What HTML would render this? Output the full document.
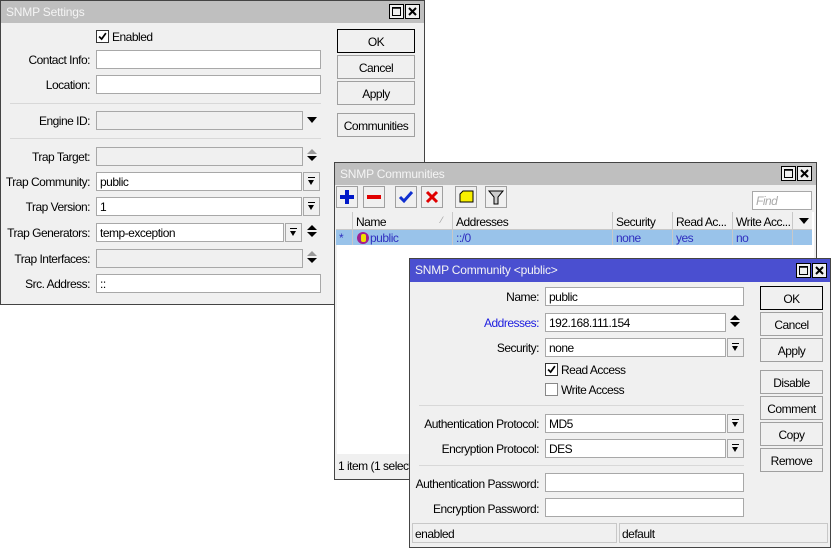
<!DOCTYPE html>
<html><head><meta charset="utf-8"><style>
*{box-sizing:border-box;margin:0;padding:0}
body{width:833px;height:548px;background:#fff;position:relative;overflow:hidden;font-family:"Liberation Sans",sans-serif;font-size:12px;letter-spacing:-0.5px;color:#000}
.a{position:absolute}
.win{position:absolute;background:#f0f0f0;border:1px solid #444}
.tb{position:absolute;left:0;right:0;top:0;height:22px;background:#bfbfbf;color:#f4f4f4;font-size:12px;padding:4px 0 0 5px;letter-spacing:-0.2px}
.tbtn{position:absolute;top:3px;width:15px;height:15px}
.lbl{position:absolute;text-align:right;white-space:nowrap}
.fld{position:absolute;height:19px;background:#fff;border:1px solid #a8a8a8;padding:2px 0 0 3px;white-space:nowrap;overflow:hidden}
.dis{background:#f0f0f0}
.btn{position:absolute;height:24px;border:1px solid #a0a0a0;background:#f0f0f0;text-align:center;padding-top:5px;font-size:12px}
.btn.def{border:1px solid #000}
.sep{position:absolute;height:1px;background:#d8d8d8}
.dd{position:absolute;width:17px;height:19px;border:1px solid #a8a8a8;background:#f0f0f0}
.dd::before{content:"";position:absolute;left:4px;top:4px;width:7px;height:1px;background:#000}
.dd::after{content:"";position:absolute;left:4px;top:7px;border-left:3.5px solid transparent;border-right:3.5px solid transparent;border-top:5px solid #000}
.sp{position:absolute;width:10px;height:14px}
.sp::before{content:"";position:absolute;left:0;top:0;border-left:5px solid transparent;border-right:5px solid transparent;border-bottom:5px solid #000}
.sp::after{content:"";position:absolute;left:0;top:7px;border-left:5px solid transparent;border-right:5px solid transparent;border-top:5px solid #000}
.sp.g::before{border-bottom-color:#999}
.cb{position:absolute;width:13px;height:13px;border:1px solid #333;background:#fff}
.cb.e{border-color:#888}
.tbb{position:absolute;top:186px;width:22px;height:22px;border:1px solid #a0a0a0;background:#f0f0f0}
.th{position:absolute;top:212px;height:18px;border-right:1px solid #c8c8c8;padding:3px 0 0 3px;white-space:nowrap;overflow:hidden}
.td{position:absolute;top:230px;height:15px;color:#3030c0;padding:1px 0 0 3px;border-right:1px solid #c8c8c8}
</style></head><body>
<svg width="0" height="0" style="position:absolute"><defs>
<symbol id="mx" viewBox="0 0 15 15"><rect x=".5" y=".5" width="14" height="14" fill="#f0f0f0" stroke="#000"/><rect x="3.5" y="3.5" width="8" height="8" fill="none" stroke="#000"/><path d="M3 4h9" stroke="#000" stroke-width="1.5"/></symbol>
<symbol id="cl" viewBox="0 0 15 15"><rect x=".5" y=".5" width="14" height="14" fill="#f0f0f0" stroke="#000"/><path d="M4 4l7 7M11 4l-7 7" stroke="#000" stroke-width="2"/></symbol>
<symbol id="ck" viewBox="0 0 13 13"><path d="M2.5 6.5l3 3 5-7" stroke="#000" stroke-width="2" fill="none"/></symbol>
</defs></svg>

<!-- Window 1 -->
<div class="win" style="left:0;top:0;width:425px;height:305px">
<div class="tb">SNMP Settings<svg class="tbtn" style="left:388px"><use href="#mx"/></svg><svg class="tbtn" style="left:404px"><use href="#cl"/></svg></div>
</div>
<div class="cb" style="left:96px;top:30px"><svg width="11" height="11" viewBox="0 0 13 13"><use href="#ck"/></svg></div><div class="a" style="left:112px;top:30px">Enabled</div>
<div class="lbl" style="right:743px;top:53px">Contact Info:</div><div class="fld" style="left:96px;top:50px;width:225px"></div>
<div class="lbl" style="right:743px;top:78px">Location:</div><div class="fld" style="left:96px;top:75px;width:225px"></div>
<div class="sep" style="left:10px;top:103px;width:311px"></div>
<div class="lbl" style="right:743px;top:114px">Engine ID:</div><div class="fld dis" style="left:96px;top:111px;width:207px"></div>
<div class="a" style="left:307px;top:117px;border-left:5px solid transparent;border-right:5px solid transparent;border-top:6px solid #000"></div>
<div class="sep" style="left:10px;top:138px;width:311px"></div>
<div class="lbl" style="right:743px;top:150px">Trap Target:</div><div class="fld dis" style="left:96px;top:147px;width:207px"></div><div class="sp g" style="left:307px;top:149px"></div>
<div class="lbl" style="right:743px;top:175px">Trap Community:</div><div class="fld" style="left:96px;top:172px;width:206px">public</div><div class="dd" style="left:303px;top:172px"></div>
<div class="lbl" style="right:743px;top:200px">Trap Version:</div><div class="fld" style="left:96px;top:197px;width:206px">1</div><div class="dd" style="left:303px;top:197px"></div>
<div class="lbl" style="right:743px;top:226px">Trap Generators:</div><div class="fld" style="left:96px;top:223px;width:188px">temp-exception</div><div class="dd" style="left:285px;top:223px"></div><div class="sp" style="left:307px;top:225px"></div>
<div class="lbl" style="right:743px;top:252px">Trap Interfaces:</div><div class="fld dis" style="left:96px;top:249px;width:207px"></div><div class="sp g" style="left:307px;top:251px"></div>
<div class="lbl" style="right:743px;top:277px">Src. Address:</div><div class="fld" style="left:96px;top:274px;width:225px">::</div>
<div class="btn def" style="left:337px;top:29px;width:78px">OK</div>
<div class="btn" style="left:337px;top:55px;width:78px">Cancel</div>
<div class="btn" style="left:337px;top:81px;width:78px">Apply</div>
<div class="btn" style="left:337px;top:113px;width:78px">Communities</div>

<!-- Window 2 -->
<div class="win" style="left:334px;top:162px;width:483px;height:318px">
<div class="tb">SNMP Communities<svg class="tbtn" style="left:446px"><use href="#mx"/></svg><svg class="tbtn" style="left:462px"><use href="#cl"/></svg></div>
<div class="a" style="left:2px;top:49px;width:477px;height:242px;background:#fff"></div>
<div class="a" style="left:3px;top:296px">1 item (1 selected)</div>
</div>
<div class="tbb" style="left:336px"><svg width="20" height="20" style="position:absolute;left:0;top:0"><path d="M10 3v14M3 10h14" stroke="#0018c8" stroke-width="4"/></svg></div>
<div class="tbb" style="left:363px"><svg width="20" height="20" style="position:absolute;left:0;top:0"><path d="M3 10h14" stroke="#e00000" stroke-width="4"/></svg></div>
<div class="tbb" style="left:395px"><svg width="20" height="20" style="position:absolute;left:0;top:0"><path d="M4 10l4 4 8-9" stroke="#1030d0" stroke-width="3" fill="none"/></svg></div>
<div class="tbb" style="left:421px"><svg width="20" height="20" style="position:absolute;left:0;top:0"><path d="M5 5l10 10M15 5L5 15" stroke="#e00000" stroke-width="3"/></svg></div>
<div class="tbb" style="left:455px"><svg width="20" height="20" style="position:absolute;left:0;top:0"><path d="M4 7l3-3h10v11H4z" fill="#f8f000" stroke="#000"/></svg></div>
<div class="tbb" style="left:485px"><svg width="20" height="20" style="position:absolute;left:0;top:0"><path d="M3 4h14l-5 6v7h-4v-7z" fill="#ccc" stroke="#000"/></svg></div>
<div class="fld" style="left:752px;top:191px;width:60px;color:#aaa;font-style:italic">Find</div>
<div class="a" style="left:336px;top:212px;width:476px;height:18px;background:#f0f0f0;border-bottom:1px solid #c8c8c8"></div>
<div class="th" style="left:336px;width:17px"></div>
<div class="th" style="left:353px;width:100px">Name<span style="position:absolute;left:88px;color:#999;font-size:9px">⁄</span></div>
<div class="th" style="left:453px;width:160px">Addresses</div>
<div class="th" style="left:613px;width:60px">Security</div>
<div class="th" style="left:673px;width:60px">Read Ac...</div>
<div class="th" style="left:733px;width:60px">Write Acc...</div>
<div class="a" style="left:799px;top:218px;border-left:5px solid transparent;border-right:5px solid transparent;border-top:6px solid #000"></div>
<div class="a" style="left:336px;top:230px;width:476px;height:15px;background:#99c3ea"></div>
<div class="td" style="left:336px;width:17px">*</div>
<div class="td" style="left:353px;width:100px;padding-left:4px"><span style="display:inline-block;width:12px;height:12px;border-radius:50%;background:#a02090;vertical-align:-2px;position:relative;margin-right:1px"><span style="position:absolute;left:3.5px;top:2px;width:5px;height:8px;background:#f0e000;border-radius:2px"></span></span>public</div>
<div class="td" style="left:453px;width:160px">::/0</div>
<div class="td" style="left:613px;width:60px">none</div>
<div class="td" style="left:673px;width:60px">yes</div>
<div class="td" style="left:733px;width:60px">no</div>

<!-- Window 3 -->
<div class="win" style="left:409px;top:258px;width:422px;height:290px">
<div class="tb" style="background:#4a4fd0;height:23px">SNMP Community &lt;public&gt;<svg class="tbtn" style="left:386px;top:4px"><use href="#mx"/></svg><svg class="tbtn" style="left:402px;top:4px"><use href="#cl"/></svg></div>
</div>
<div class="lbl" style="right:294px;top:290px">Name:</div><div class="fld" style="left:545px;top:287px;width:199px">public</div>
<div class="lbl" style="right:294px;top:316px;color:#2020e0">Addresses:</div><div class="fld" style="left:545px;top:313px;width:181px">192.168.111.154</div><div class="sp" style="left:730px;top:315px"></div>
<div class="lbl" style="right:294px;top:341px">Security:</div><div class="fld" style="left:545px;top:338px;width:181px">none</div><div class="dd" style="left:727px;top:338px"></div>
<div class="cb" style="left:545px;top:363px"><svg width="11" height="11" viewBox="0 0 13 13"><use href="#ck"/></svg></div><div class="a" style="left:561px;top:363px">Read Access</div>
<div class="cb e" style="left:545px;top:383px"></div><div class="a" style="left:561px;top:383px">Write Access</div>
<div class="sep" style="left:419px;top:405px;width:325px"></div>
<div class="lbl" style="right:294px;top:417px">Authentication Protocol:</div><div class="fld" style="left:545px;top:414px;width:181px">MD5</div><div class="dd" style="left:727px;top:414px"></div>
<div class="lbl" style="right:294px;top:442px">Encryption Protocol:</div><div class="fld" style="left:545px;top:439px;width:181px">DES</div><div class="dd" style="left:727px;top:439px"></div>
<div class="sep" style="left:419px;top:465px;width:325px"></div>
<div class="lbl" style="right:294px;top:477px">Authentication Password:</div><div class="fld" style="left:545px;top:473px;width:199px"></div>
<div class="lbl" style="right:294px;top:502px">Encryption Password:</div><div class="fld" style="left:545px;top:498px;width:199px"></div>
<div class="a" style="left:412px;top:523px;width:205px;height:20px;border:1px solid #c8c8c8;padding:3px 0 0 2px">enabled</div>
<div class="a" style="left:619px;top:523px;width:209px;height:20px;border:1px solid #c8c8c8;padding:3px 0 0 2px">default</div>
<div class="btn def" style="left:760px;top:286px;width:63px">OK</div>
<div class="btn" style="left:760px;top:312px;width:63px">Cancel</div>
<div class="btn" style="left:760px;top:338px;width:63px">Apply</div>
<div class="btn" style="left:760px;top:370px;width:63px">Disable</div>
<div class="btn" style="left:760px;top:396px;width:63px">Comment</div>
<div class="btn" style="left:760px;top:422px;width:63px">Copy</div>
<div class="btn" style="left:760px;top:448px;width:63px">Remove</div>
</body></html>
